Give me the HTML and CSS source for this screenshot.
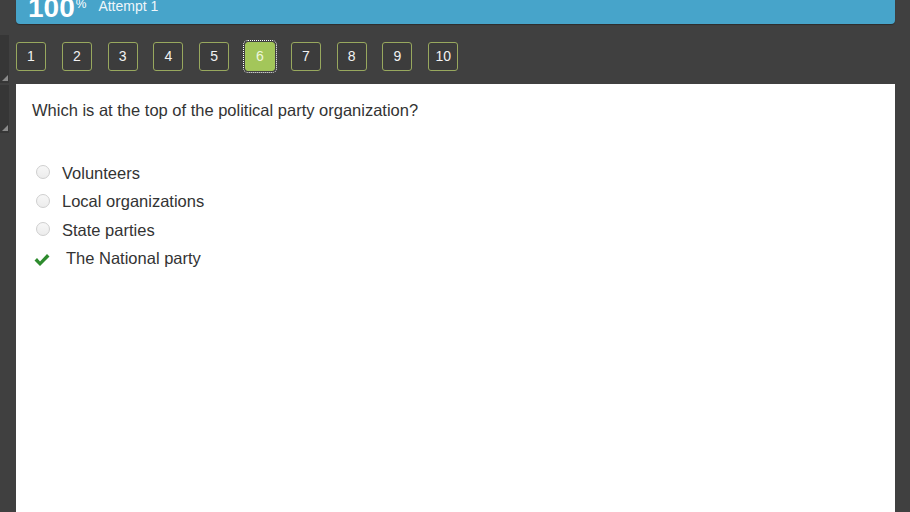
FILE: index.html
```html
<!DOCTYPE html>
<html>
<head>
<meta charset="utf-8">
<link rel="stylesheet" href="styles.css">
</head>
<body>
<div class="page">
  <div class="rail">
    <div class="tab"><span class="grip"></span></div>
    <div class="tab"><span class="grip"></span></div>
  </div>
  <div class="main">
    <header class="score">
      <span class="pct">100<sup>%</sup></span>
      <span class="attempt">Attempt 1</span>
    </header>
    <nav class="qnav">
      <button class="qbtn">1</button>
      <button class="qbtn">2</button>
      <button class="qbtn">3</button>
      <button class="qbtn">4</button>
      <button class="qbtn">5</button>
      <button class="qbtn active">6</button>
      <button class="qbtn">7</button>
      <button class="qbtn">8</button>
      <button class="qbtn">9</button>
      <button class="qbtn">10</button>
    </nav>
    <section class="card">
      <p class="question">Which is at the top of the political party organization?</p>
      <ul class="options">
        <li class="opt"><span class="radio"></span><span>Volunteers</span></li>
        <li class="opt"><span class="radio"></span><span>Local organizations</span></li>
        <li class="opt"><span class="radio"></span><span>State parties</span></li>
        <li class="opt correct"><svg class="check" width="16" height="14" viewBox="0 0 16 14"><path d="M0.5 7.5 L3 5 L6 8.5 L13 1 L15.5 3.5 L6 13 Z" fill="#2e8b2e"/></svg><span>The National party</span></li>
      </ul>
    </section>
  </div>
</div>
</body>
</html>
```
FILE: styles.css
```css
html, body {
  margin: 0;
  padding: 0;
  height: 100%;
}
body {
  background: #404040;
  font-family: "Liberation Sans", Arial, sans-serif;
  overflow: hidden;
}
.page {
  display: flex;
  height: 512px;
}
.rail {
  width: 16px;
  flex: none;
  padding-top: 35px;
  display: flex;
  flex-direction: column;
  gap: 2px;
}
.tab {
  width: 9px;
  height: 48px;
  background: #363636;
  position: relative;
}
.grip {
  position: absolute;
  right: 1px;
  bottom: 2px;
  width: 0;
  height: 0;
  border-left: 6px solid transparent;
  border-bottom: 6px solid #8a8a8a;
}
.main {
  width: 879px;
  flex: none;
  display: flex;
  flex-direction: column;
}
.score {
  height: 24px;
  background: #47a4ca;
  border-radius: 0 0 4px 4px;
  display: flex;
  align-items: flex-start;
  padding-left: 12px;
  box-shadow: 0 1px 1px rgba(0,0,0,0.3);
  overflow: hidden;
}
.pct {
  color: #fff;
  font-weight: bold;
  font-size: 28px;
  line-height: 28px;
  margin-top: -6px;
  display: flex;
  align-items: flex-start;
}
.pct sup {
  font-size: 12px;
  font-weight: normal;
  line-height: 12px;
  margin-top: 4px;
  margin-left: 1px;
}
.attempt {
  color: #eef6fa;
  font-size: 14px;
  margin-left: 12px;
  line-height: 14px;
  margin-top: -1px;
}
.qnav {
  height: 60px;
  display: flex;
  gap: 15.8px;
  padding-top: 18px;
  box-sizing: border-box;
}
.qbtn {
  width: 30px;
  height: 29px;
  box-sizing: border-box;
  border: 1px solid #98a85e;
  border-radius: 3px;
  background: #3c3c3c;
  color: #f2f2f2;
  font-family: "Liberation Sans", Arial, sans-serif;
  font-size: 14px;
  padding: 0;
  line-height: 27px;
  text-align: center;
}
.qbtn.active {
  background: #a3c65a;
  border-color: #a3c65a;
  color: #eef7dc;
  outline: 1px dotted #ffffff;
  outline-offset: 1px;
}
.card {
  flex: 1;
  background: #ffffff;
  padding: 16px 16px;
}
.question {
  margin: 0;
  font-size: 16.5px;
  line-height: 20px;
  color: #333333;
}
.options {
  list-style: none;
  margin: 39px 0 0 0;
  padding: 0;
}
.opt {
  display: flex;
  align-items: center;
  height: 28.5px;
  font-size: 16.5px;
  color: #333333;
}
.radio {
  width: 12px;
  height: 12px;
  border: 1px solid #cfcfcf;
  border-radius: 50%;
  background: linear-gradient(#f7f7f7, #ececec);
  margin-left: 4px;
  margin-right: 12px;
  position: relative;
  top: -1px;
}
.check {
  margin-left: 2px;
  margin-right: 16px;
  position: relative;
  top: 1px;
}
```
